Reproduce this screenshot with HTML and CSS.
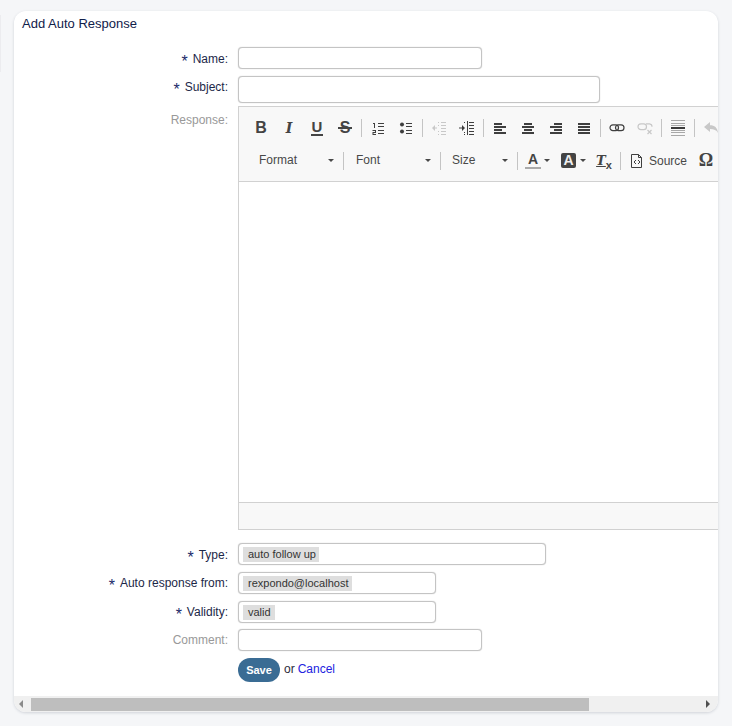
FILE: index.html
```html
<!DOCTYPE html>
<html lang="en">
<head>
<meta charset="utf-8">
<title>Add Auto Response</title>
<link rel="stylesheet" href="styles.css">
</head>
<body>
<div class="stub"></div>
<main class="card">
  <div class="scroller">
    <h1 class="title">Add Auto Response</h1>
    <form class="form">
      <div class="row row-name">
        <label class="label"><span class="req">*</span>Name:</label>
        <input class="input w-244" type="text">
      </div>
      <div class="row row-subject">
        <label class="label"><span class="req">*</span>Subject:</label>
        <input class="input w-362 tall" type="text">
      </div>
      <div class="row row-editor">
        <label class="label muted">Response:</label>
        <div class="editor">
          <div class="toolbar">
            <div class="tb-row">
              <span class="btn glyph g-b">B</span>
              <span class="btn glyph g-i">I</span>
              <span class="btn glyph g-u"><span>U</span></span>
              <span class="btn glyph g-s"><span>S</span></span>
              <i class="sep"></i>
              <span class="btn"><svg class="ic" viewBox="0 0 16 16"><path fill="#3f3f3f" d="M3 3h2v5H4V4H3zM2.500 10H6v3H3.500v1H6v1H2.500v-3H5v-1H2.500zM8 3h6v1H8zM8 6h6v1H8zM8 10h6v1H8zM8 13h6v1H8z"/></svg></span>
              <span class="btn"><svg class="ic" viewBox="0 0 16 16"><circle cx="4" cy="4.500" r="2" fill="#3f3f3f"/><circle cx="4" cy="11.500" r="2" fill="#3f3f3f"/><path fill="#3f3f3f" d="M8 3h6v1H8zM8 6h6v1H8zM8 10h6v1H8zM8 13h6v1H8z"/></svg></span>
              <i class="sep"></i>
              <span class="btn"><svg class="ic" viewBox="0 0 16 16"><path fill="#c8c8c8" d="M1 8l3-3v2.500h2v1H4V11zM7 2h1v1H7zM7 5h1v1H7zM7 11h1v1H7zM7 14h1v1H7zM10 2h5v1h-5zM10 5h5v1h-5zM10 8h5v1h-5zM10 11h5v1h-5zM10 14h5v1h-5z"/></svg></span>
              <span class="btn"><svg class="ic" viewBox="0 0 16 16"><path fill="#3f3f3f" d="M6 8L3 5v2.500H0v1h3V11zM5 2h1v1H5zM5 12h1v1H5zM5 14h1v1H5zM8 1h1v14H8zM10 2h5v1h-5zM10 5h5v1h-5zM10 8h5v1h-5zM10 11h5v1h-5zM10 14h5v1h-5z"/></svg></span>
              <i class="sep"></i>
              <span class="btn"><svg class="ic" viewBox="0 0 16 16"><path fill="#3f3f3f" d="M2 3h8v2H2zM2 6h12v2H2zM2 9h8v2H2zM2 12h12v2H2z"/></svg></span>
              <span class="btn"><svg class="ic" viewBox="0 0 16 16"><path fill="#3f3f3f" d="M4 3h8v2H4zM2 6h12v2H2zM4 9h8v2H4zM2 12h12v2H2z"/></svg></span>
              <span class="btn"><svg class="ic" viewBox="0 0 16 16"><path fill="#3f3f3f" d="M6 3h8v2H6zM2 6h12v2H2zM6 9h8v2H6zM2 12h12v2H2z"/></svg></span>
              <span class="btn"><svg class="ic" viewBox="0 0 16 16"><path fill="#3f3f3f" d="M2 3h12v2H2zM2 6h12v2H2zM2 9h12v2H2zM2 12h12v2H2z"/></svg></span>
              <i class="sep"></i>
              <span class="btn"><svg class="ic" viewBox="0 0 16 16"><g fill="none" stroke="#3f3f3f" stroke-width="1.200"><rect x="1" y="4.800" width="8.500" height="5.800" rx="2.900"/><rect x="6.500" y="4.800" width="8.500" height="5.800" rx="2.900"/></g></svg></span>
              <span class="btn"><svg class="ic" viewBox="0 0 16 16"><g fill="none" stroke="#c8c8c8" stroke-width="1.200"><rect x="1" y="3.800" width="8.500" height="5.800" rx="2.900"/><path d="M9 3.800h3.500a2.900 2.900 0 0 1 2.500 3"/><path d="M10.500 10l4 4M14.500 10l-4 4"/></g></svg></span>
              <i class="sep"></i>
              <span class="btn"><svg class="ic" viewBox="0 0 16 16"><path fill="#a8a8a8" d="M1 0h14v1H1zM1 3h14v1H1zM1 5h14v1H1zM1 10h14v1H1zM1 12h14v1H1zM1 15h14v1H1z"/><path fill="#3a3a3a" d="M1 7h14v2H1z"/></svg></span>
              <i class="sep"></i>
              <span class="btn"><svg class="ic" viewBox="0 0 16 16"><path fill="#c8c8c8" d="M7 2v3.200c4.500 0 7.500 2.300 8 7.800-1.500-3-4-4-8-4V12L1 7z"/></svg></span>
            </div>
            <div class="tb-row">
              <span class="combo c-format">Format<i class="caret"></i></span>
              <i class="sep"></i>
              <span class="combo c-font">Font<i class="caret"></i></span>
              <i class="sep"></i>
              <span class="combo c-size">Size<i class="caret"></i></span>
              <i class="sep"></i>
              <span class="btn wide"><span class="glyph g-color">A</span><i class="caret"></i></span>
              <span class="btn wide"><span class="glyph g-bg">A</span><i class="caret"></i></span>
              <span class="btn"><span class="glyph g-tx">T<sub>x</sub></span></span>
              <i class="sep"></i>
              <span class="source"><svg class="ic" viewBox="0 0 16 16"><path fill="none" stroke="#3f3f3f" d="M2.500 1.500h7l3 3v10h-10zM9.500 1.500v3h3"/><path fill="none" stroke="#3f3f3f" d="M7 7L5 9l2 2M9 7l2 2-2 2"/></svg>Source</span>
              <span class="btn glyph g-omega">Ω</span>
            </div>
          </div>
          <div class="editor-body"></div>
          <div class="editor-foot"></div>
        </div>
      </div>
      <div class="row row-type">
        <label class="label"><span class="req">*</span>Type:</label>
        <div class="input select w-308"><span class="chip chip-type">auto follow up</span></div>
      </div>
      <div class="row row-from">
        <label class="label"><span class="req">*</span>Auto response from:</label>
        <div class="input select w-198"><span class="chip">rexpondo@localhost</span></div>
      </div>
      <div class="row row-valid">
        <label class="label"><span class="req">*</span>Validity:</label>
        <div class="input select w-198"><span class="chip">valid</span></div>
      </div>
      <div class="row row-comment">
        <label class="label muted">Comment:</label>
        <input class="input w-244" type="text">
      </div>
      <div class="row row-actions">
        <span class="label"></span>
        <div class="actions">
          <button class="save" type="button">Save</button>
          <span class="or">or</span>
          <a class="cancel" href="#">Cancel</a>
        </div>
      </div>
    </form>
  </div>
  <div class="hscroll">
    <span class="arrow arrow-left"></span>
    <span class="thumb"></span>
    <span class="arrow arrow-right"></span>
  </div>
</main>
</body>
</html>
```
FILE: styles.css
```css
* { box-sizing: border-box; }
html, body { margin: 0; height: 100%; overflow: hidden; }
body {
  display: flex;
  align-items: flex-start;
  background: #f5f6f8;
  padding: 11px 0 14px;
  font-family: "Liberation Sans", Arial, sans-serif;
  font-size: 12px;
  color: #1c2748;
}
.stub {
  width: 1px;
  height: 57px;
  margin: 4px 13px 0 0;
  background: #ececef;
}
.card {
  width: 704px;
  height: 701px;
  display: flex;
  flex-direction: column;
  background: #fff;
  border-radius: 12px;
  overflow: hidden;
  box-shadow: 0 1px 3px rgba(40, 50, 80, .18);
}
.scroller { flex: 1; overflow: hidden; min-height: 0; }
.title {
  margin: 0;
  padding: 5px 8px 0;
  height: 36px;
  font-size: 13px;
  line-height: 15px;
  font-weight: 400;
  color: #10204a;
}
.row { display: flex; align-items: center; column-gap: 10px; }
.label {
  width: 214px;
  flex: none;
  text-align: right;
  line-height: 14px;
}
.req {
  display: inline-block;
  margin-right: 5px;
  color: #1a2a6a;
  font-size: 16px;
  line-height: 10px;
  vertical-align: -4px;
}
.muted { color: #999; }
.row-subject { margin-top: 7px; }
.row-subject .label { align-self: flex-start; padding-top: 4px; }
.row-editor { margin-top: 3px; align-items: flex-start; }
.row-editor .label { padding-top: 7px; }
.row-type { margin-top: 13px; }
.row-from, .row-valid { margin-top: 7px; }
.row-comment { margin-top: 6px; }
.row-actions { margin-top: 7px; }
.row-name .label, .row-type .label { padding-top: 2px; }

.input {
  height: 22px;
  border: 1px solid #c4c4c4;
  border-radius: 4px;
  background: #fff;
  box-shadow: 0 0 1px #bbb;
  padding: 0 4px;
  outline: 0;
  font: inherit;
}
.tall { height: 27px; }
.w-244 { width: 244px; }
.w-362 { width: 362px; }
.w-308 { width: 308px; }
.w-198 { width: 198px; }
.select { display: flex; align-items: center; }
.chip {
  background: #dedede;
  color: #333;
  font-size: 11px;
  line-height: 15px;
  padding: 0 4px 0 5px;
}
.chip-type { padding-right: 3px; }

.editor {
  flex: none;
  width: 600px;
  height: 424px;
  display: flex;
  flex-direction: column;
  border: 1px solid #d1d1d1;
}
.toolbar {
  height: 75px;
  flex: none;
  padding: 4px 8px 0;
  background: #f8f8f8;
  border-bottom: 1px solid #d1d1d1;
}
.tb-row { display: flex; align-items: center; height: 33px; }
.btn {
  flex: none;
  width: 28px;
  height: 33px;
  display: flex;
  align-items: center;
  justify-content: center;
}
.btn.wide { width: 35px; justify-content: flex-start; padding-left: 5px; }
.ic { width: 16px; height: 16px; flex: none; }
.sep { flex: none; width: 1px; height: 18px; margin: 0 2px; background: #c4c4c4; }
.glyph { color: #444; font-weight: 700; }
.g-b { font-size: 16px; }
.g-i { font: italic 700 14px "DejaVu Serif", serif; }
.g-u { font-size: 15px; }
.g-u span { border-bottom: 2px solid #444; line-height: 15px; padding: 0 1px; }
.g-s { font-size: 16px; }
.g-s span {
  padding: 0 2px;
  background: linear-gradient(#444, #444) center / 100% 2px no-repeat;
}
.combo {
  flex: none;
  position: relative;
  height: 33px;
  line-height: 33px;
  padding-left: 10px;
  color: #484848;
}
.c-format { width: 92px; margin-left: 2px; }
.c-font { width: 92px; }
.c-size { width: 72px; padding-left: 9px; }
.combo .caret { position: absolute; right: 7px; top: 15px; }
.caret {
  display: block;
  flex: none;
  width: 0;
  height: 0;
  border: 3px solid transparent;
  border-top-color: #484848;
  border-bottom: 0;
}
.g-color {
  width: 16px;
  margin-right: 3px;
  text-align: center;
  font-size: 14px;
  line-height: 15px;
  border-bottom: 2px solid #aaa;
}
.g-bg {
  width: 15px;
  height: 15px;
  margin: 0 4px 0 1px;
  text-align: center;
  font-size: 14px;
  line-height: 15px;
  color: #f0f0f0;
  background: #444;
  border-radius: 2px;
}
.g-tx { font: italic 700 13px "DejaVu Serif", serif; border-bottom: 0; text-decoration: underline; }
.g-tx sub { font: 700 11px "Liberation Sans", sans-serif; vertical-align: -4px; line-height: 0; }
.source {
  flex: none;
  width: 67px;
  padding-left: 6px;
  display: flex;
  align-items: center;
  gap: 4px;
  color: #484848;
}
.g-omega { margin-left: 2px; font: 700 18px "Liberation Serif", serif; }
.editor-body { flex: 1; background: #fff; }
.editor-foot { height: 27px; flex: none; background: #f8f8f8; border-top: 1px solid #d1d1d1; }

.actions { display: flex; align-items: center; }
.save {
  width: 42px;
  height: 24px;
  border: 0;
  border-radius: 12px;
  background: #3a6c94;
  color: #fff;
  font: 700 11px "Liberation Sans", sans-serif;
  padding: 0;
}
.or { margin: 0 0 2px 4px; color: #2a2a3a; }
.cancel { margin: 0 0 2px 3px; color: #2222e0; text-decoration: none; }

.hscroll {
  flex: none;
  height: 16px;
  display: flex;
  align-items: center;
  background: #f0f0f0;
}
.thumb { width: 558px; height: 13px; margin: 0 117px 0 8px; background: #bebebe; }
.arrow { width: 0; height: 0; border: 4px solid transparent; flex: none; }
.arrow-left { margin-left: 5px; border-right-color: #8a8a8a; border-left: 0; }
.arrow-right { border-left-color: #505050; border-right: 0; }
```
